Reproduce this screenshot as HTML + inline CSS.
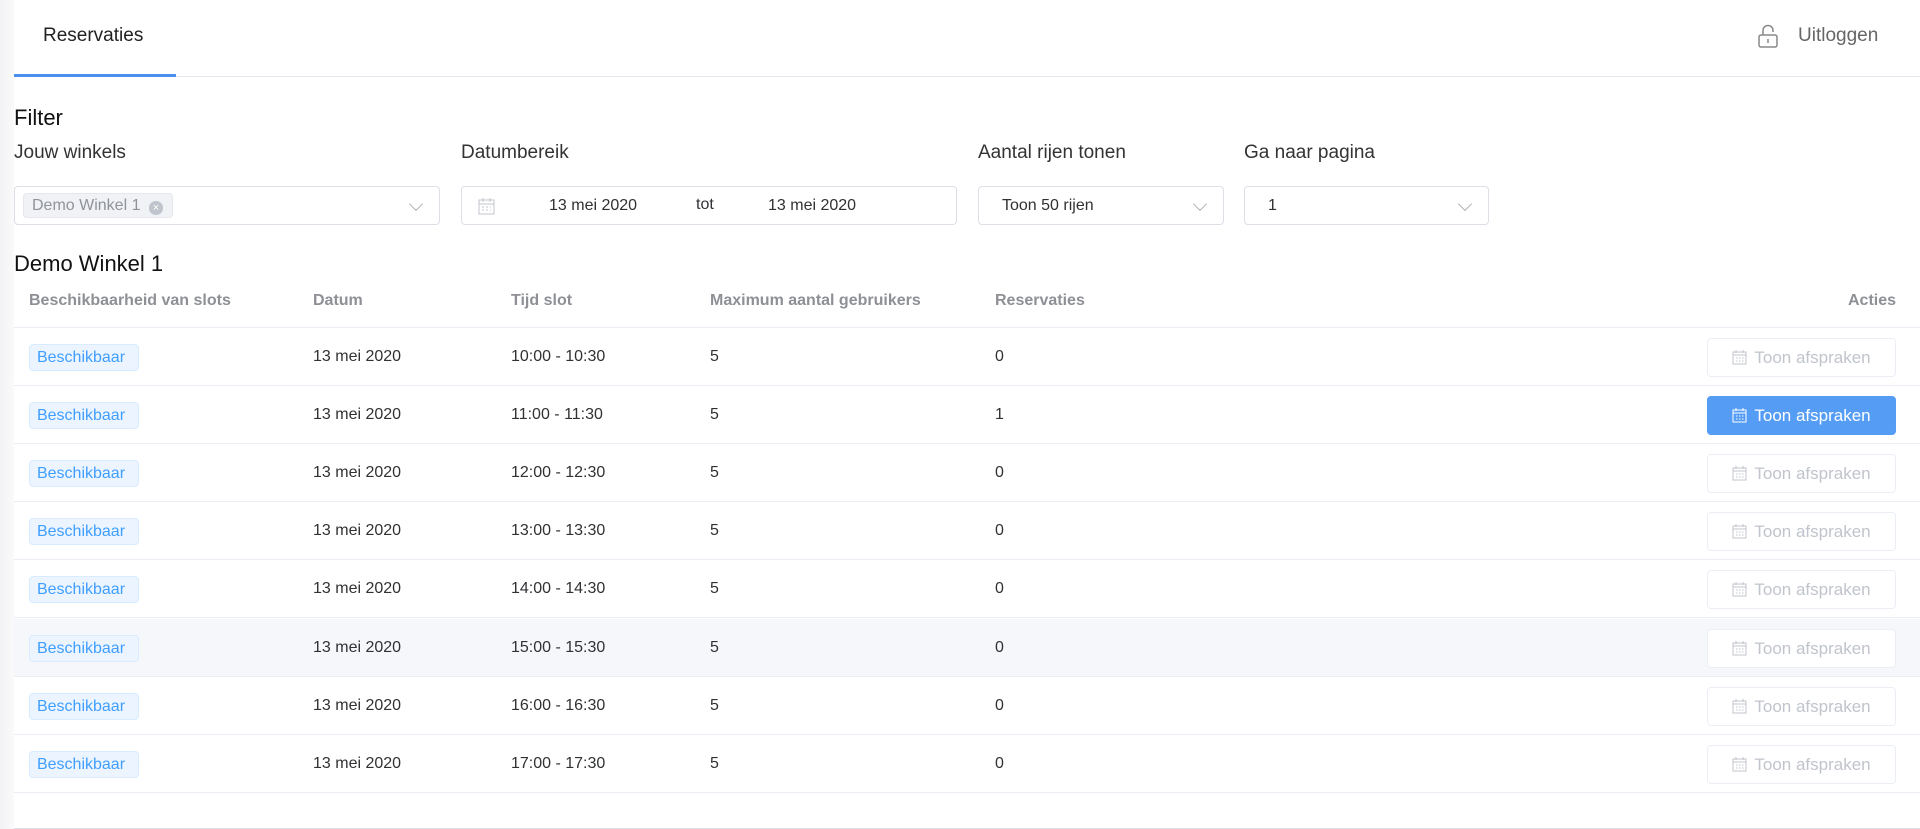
<!DOCTYPE html>
<html><head><meta charset="utf-8"><style>
*{box-sizing:border-box;margin:0;padding:0}
body{width:1920px;height:829px;background:#fff;font-family:"Liberation Sans",sans-serif;position:relative;overflow:hidden;color:#303133}
.abs{position:absolute}
.strip{left:0;top:0;width:14px;height:829px;background:linear-gradient(90deg,#f2f2f4,#fafafa)}
.lbl{font-size:19px;color:#333;top:142px}
.inp{top:186px;height:39px;border:1px solid #dcdfe6;border-radius:4px;background:#fff}
.chev{position:absolute;right:18px;top:12px;width:10px;height:10px;border-right:1.3px solid #b0b3b8;border-bottom:1.3px solid #b0b3b8;transform:rotate(45deg)}
.th{top:292px;font-size:16px;font-weight:bold;color:#8e9095}
.row{left:14px;width:1906px;height:58px;border-bottom:1px solid #ebeef5}
.row span{position:absolute;top:0;line-height:58px;font-size:16px;color:#303133}
.tag{position:absolute;left:15px;top:16px;height:27px;width:110px;background:#ecf5ff;border:1px solid #d9ecff;border-radius:4px;color:#409eff;font-size:16px;line-height:25px;text-align:center;text-indent:-6px}
.btn{position:absolute;left:1693px;top:10px;width:189px;height:39px;border:1px solid #ebeef5;border-radius:4px;color:#c0c4cc;font-size:17px;line-height:37px;text-align:center;background:#fff}
.btn.on{background:#559cf5;border-color:#559cf5;color:#fff}
.btn svg{vertical-align:-2px;margin-right:7px}
</style></head><body>
<div class="abs strip"></div>
<div class="abs" style="left:43px;top:25px;font-size:19px;color:#222">Reservaties</div>
<div class="abs" style="left:14px;top:76px;width:1906px;height:1px;background:#e4e7ed"></div>
<div class="abs" style="left:14px;top:74px;width:162px;height:3px;background:#4a90f0"></div>
<svg class="abs" style="left:1757px;top:24px" width="22" height="24" viewBox="0 0 22 24"><path d="M6 11V6.5a5 5 0 0 1 10 0V8" fill="none" stroke="#888" stroke-width="1.5"/><rect x="2" y="11" width="18" height="12" rx="2" fill="none" stroke="#888" stroke-width="1.5"/><path d="M11 15v4" stroke="#888" stroke-width="1.5"/></svg>
<div class="abs" style="left:1798px;top:25px;font-size:19px;color:#666">Uitloggen</div>
<div class="abs" style="left:14px;top:105px;font-size:22px;color:#111">Filter</div>
<div class="abs lbl" style="left:14px">Jouw winkels</div>
<div class="abs lbl" style="left:461px">Datumbereik</div>
<div class="abs lbl" style="left:978px">Aantal rijen tonen</div>
<div class="abs lbl" style="left:1244px">Ga naar pagina</div>
<div class="abs inp" style="left:14px;width:426px"><div style="position:absolute;left:8px;top:6px;height:25px;width:150px;background:#f0f2f5;border:1px solid #e4e7ed;border-radius:4px;font-size:16px;color:#909399;line-height:23px;padding-left:8px">Demo Winkel 1 <span style="display:inline-block;width:14px;height:14px;border-radius:50%;background:#c0c4cc;color:#fff;font-size:11px;line-height:14px;text-align:center;vertical-align:-1px;margin-left:4px">×</span></div><div class="chev"></div></div>
<div class="abs inp" style="left:461px;width:496px">
<svg style="position:absolute;left:16px;top:10px" width="17" height="18" viewBox="0 0 17 18"><rect x="1" y="3" width="15" height="14" fill="none" stroke="#c0c4cc"/><path d="M1 7h15M5 1v4M12 1v4" stroke="#c0c4cc"/><path d="M4 10h2M8 10h2M12 10h1M4 13h2M8 13h2M12 13h1" stroke="#c0c4cc"/></svg>
<span style="position:absolute;left:87px;top:10px;font-size:16px;color:#303133">13 mei 2020</span>
<span style="position:absolute;left:234px;top:9px;font-size:16px;color:#303133">tot</span>
<span style="position:absolute;left:306px;top:10px;font-size:16px;color:#303133">13 mei 2020</span></div>
<div class="abs inp" style="left:978px;width:246px"><span style="position:absolute;left:23px;top:10px;font-size:16px;color:#303133">Toon 50 rijen</span><div class="chev"></div></div>
<div class="abs inp" style="left:1244px;width:245px"><span style="position:absolute;left:23px;top:10px;font-size:16px;color:#303133">1</span><div class="chev"></div></div>
<div class="abs" style="left:14px;top:251px;font-size:22px;color:#111">Demo Winkel 1</div>
<div class="abs th" style="left:29px">Beschikbaarheid van slots</div>
<div class="abs th" style="left:313px">Datum</div>
<div class="abs th" style="left:511px">Tijd slot</div>
<div class="abs th" style="left:710px">Maximum aantal gebruikers</div>
<div class="abs th" style="left:995px">Reservaties</div>
<div class="abs th" style="left:1848px">Acties</div>
<div class="abs" style="left:14px;top:327px;width:1906px;height:1px;background:#ebeef5"></div>
<div class="abs" style="left:14px;top:828px;width:1906px;height:1px;background:#dcdfe6"></div>
<div id="rows"></div>
<script>
var t=["10:00 - 10:30","11:00 - 11:30","12:00 - 12:30","13:00 - 13:30","14:00 - 14:30","15:00 - 15:30","16:00 - 16:30","17:00 - 17:30"];
var ic='<svg width="15" height="15" viewBox="0 0 15 15"><rect x="1" y="2" width="13" height="12" fill="none" stroke="currentColor"/><path d="M1 5h13M4 0v3M11 0v3M4 8h1.5M7 8h1.5M10 8h1.5M4 11h1.5M7 11h1.5M10 11h1.5" stroke="currentColor"/></svg>';
var h="";
for(var i=0;i<8;i++){
h+='<div class="abs row" style="top:'+(328+i*58.1)+'px;'+(i==5?'background:#f5f7fa':'')+'"><div class="tag">Beschikbaar</div><span style="left:299px">13 mei 2020</span><span style="left:497px">'+t[i]+'</span><span style="left:696px">5</span><span style="left:981px">'+(i==1?1:0)+'</span><div class="btn'+(i==1?' on':'')+'">'+ic+'Toon afspraken</div></div>';}
document.getElementById("rows").innerHTML=h;
</script>
</body></html>
